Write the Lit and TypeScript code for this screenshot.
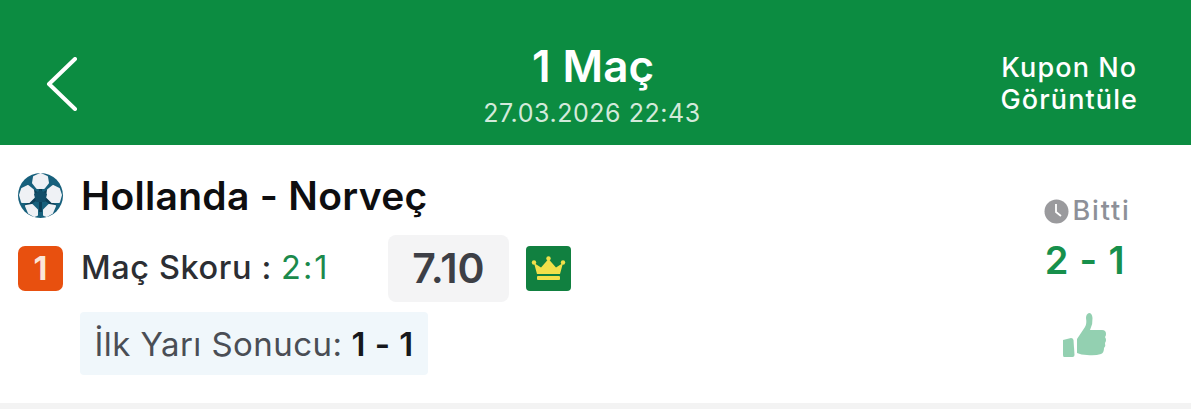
import { LitElement, html, css } from "lit";
import { customElement } from "lit/decorators.js";

@customElement("app-root")
export class AppRoot extends LitElement {
  static styles = css`
    :host { display: block; width: 1191px; height: 409px; overflow: hidden; background: #fff; font-family: Inter, "Liberation Sans", sans-serif; }
    .header { height: 145px; background: #0c8c41; color: #fff; display: grid; grid-template-columns: 1fr 400px 1fr; align-items: center; box-sizing: border-box; padding: 22px 53px 0 46px; }
    .back { display: block; width: 32px; height: 54px; }
    .mid { display: flex; flex-direction: column; align-items: center; margin-top: 1px; }
    .title { font-size: 44px; font-weight: 600; line-height: 52px; word-spacing: 1px; margin-left: 2px; }
    .date { font-size: 25px; line-height: 30px; margin-top: 6px; color: #d3eadb; letter-spacing: 0.55px; }
    .coupon { justify-self: end; text-align: center; font-size: 27px; line-height: 32px; font-weight: 500; letter-spacing: 1.1px; margin-top: 1px; white-space: nowrap; }
    .body { height: 258px; display: flex; justify-content: space-between; box-sizing: border-box; padding: 0 58px 0 17px; }
    .left { display: flex; flex-direction: column; padding-top: 27px; }
    .match { display: flex; align-items: center; gap: 17px; height: 46px; }
    .ball { width: 47px; height: 47px; display: block; }
    .teams { font-size: 39px; font-weight: 600; color: #0e0e10; letter-spacing: 0.3px; }
    .market { display: flex; align-items: center; margin-top: 16px; margin-left: 1px; height: 68px; }
    .num { width: 45px; height: 45px; border-radius: 7px; background: #e8500f; color: #fbe6d8; font-size: 32px; font-weight: 700; display: flex; align-items: center; justify-content: center; }
    .label { font-size: 32.500px; font-weight: 500; color: #2c2e33; margin-left: 18px; width: 307px; letter-spacing: 0.6px; white-space: nowrap; margin-top: -2px; }
    .pick { color: #1b8a4c; font-weight: 400; letter-spacing: 2px; }
    .odd { width: 121px; height: 67px; border-radius: 8px; background: #f4f4f5; color: #3d3f46; font-size: 41px; font-weight: 600; display: flex; align-items: center; justify-content: center; }
    .crown { width: 45px; height: 45px; margin-left: 17px; display: block; }
    .half { align-self: flex-start; margin: 10px 0 0 63px; background: #f0f7fb; border-radius: 4px; height: 63px; width: 348px; display: flex; align-items: center; justify-content: center; font-size: 33px; color: #4a4e55; white-space: nowrap; letter-spacing: 0.45px; }
    .half b { font-weight: 600; color: #16181c; margin-left: 9px; }
    .right { display: flex; flex-direction: column; align-items: center; padding-top: 50px; width: 92px; }
    .status { display: flex; align-items: center; gap: 4px; font-size: 27px; color: #8d9098; line-height: 32px; letter-spacing: 1.8px; white-space: nowrap; font-weight: 500; }
    .clock { width: 25px; height: 25px; display: block; flex: none; }
    .score { font-size: 38px; font-weight: 600; color: #17904c; line-height: 44px; margin-top: 11px; white-space: nowrap; letter-spacing: 0.8px; margin-left: -4px; }
    .thumb { width: 44px; height: 44px; margin-top: 31px; display: block; margin-left: -5px; }
    .strip { height: 6px; background: #f3f3f3; }
  `;

  render() {
    return html`
      <div class="header">
        <svg class="back" viewBox="0 0 32 54" fill="none" stroke="#fff" stroke-width="4" stroke-linecap="round" stroke-linejoin="round"><path d="M29 2 3 27l26 25"/></svg>
        <div class="mid"><div class="title">1 Maç</div><div class="date">27.03.2026 22:43</div></div>
        <div class="coupon">Kupon No<br />Görüntüle</div>
      </div>
      <div class="body">
        <div class="left">
          <div class="match">
            <svg class="ball" viewBox="0 0 47 47">
              <circle cx="23.5" cy="23.5" r="22.5" fill="#17607c"/>
              <path d="M23.500 8v32M9 14l29 20M38 14 9 34" stroke="#0c3f57" stroke-width="3"/>
              <g fill="#eff1f5" stroke="#eff1f5" stroke-width="2" stroke-linejoin="round">
                <path d="M17 5l6.500-3 6.500 3 1 6-4 5h-7l-4-5z"/>
                <path d="M3 23l2-6 6-3 5 4 1 7-5 5-7 0z"/>
                <path d="M44 23l-2-6-6-3-5 4-1 7 5 5 7 0z"/>
                <path d="M9 34l6-1 5 5 0 5-3 1-5-3z"/>
                <path d="M38 34l-6-1-5 5 0 5 3 1 5-3z"/>
              </g>
              <path d="M17 22l6.500-4 6.500 4-2 8h-9z" fill="#124e69"/>
            </svg>
            <div class="teams">Hollanda - Norveç</div>
          </div>
          <div class="market">
            <div class="num">1</div>
            <div class="label">Maç Skoru : <span class="pick">2:1</span></div>
            <div class="odd">7.10</div>
            <svg class="crown" viewBox="0 0 45 45">
              <rect width="45" height="45" rx="4" fill="#118040"/>
              <path d="M11 28 8 17l7 4.500 7.500-8.500 7.500 8.500 7-4.500-3 11z" fill="#f2e04a"/>
              <circle cx="8" cy="16.500" r="2.200" fill="#f2e04a"/><circle cx="22.500" cy="12.500" r="2.200" fill="#f2e04a"/><circle cx="37" cy="16.500" r="2.200" fill="#f2e04a"/>
              <rect x="11" y="30" width="23" height="4" rx="1" fill="#f2e04a"/>
            </svg>
          </div>
          <div class="half">İlk Yarı Sonucu:<b>1 - 1</b></div>
        </div>
        <div class="right">
          <div class="status">
            <svg class="clock" viewBox="0 0 25 25"><circle cx="12.500" cy="12.500" r="12" fill="#9a9a9d"/><path d="M12 5v8l5 4" fill="none" stroke="#fff" stroke-width="1.800"/></svg>
            <span>Bitti</span>
          </div>
          <div class="score">2 - 1</div>
          <svg class="thumb" viewBox="0 0 44 44" fill="#93d0b1">
            <path d="M0 27l8-2q2 0 2.500 2l1 15q0 2-2 2H1q-1 0-1-2z"/>
            <path d="M14 26 22 14q2-3 1-9 0-4 3-5 3 0 3.500 5 .5 6-2.500 12h12q4 0 4 4 0 2-1 3 2 3 0 6 1 3-1 5 0 5-3 6-6 2-14 1-6 0-10-2z"/>
          </svg>
        </div>
      </div>
      <div class="strip"></div>
    `;
  }
}
